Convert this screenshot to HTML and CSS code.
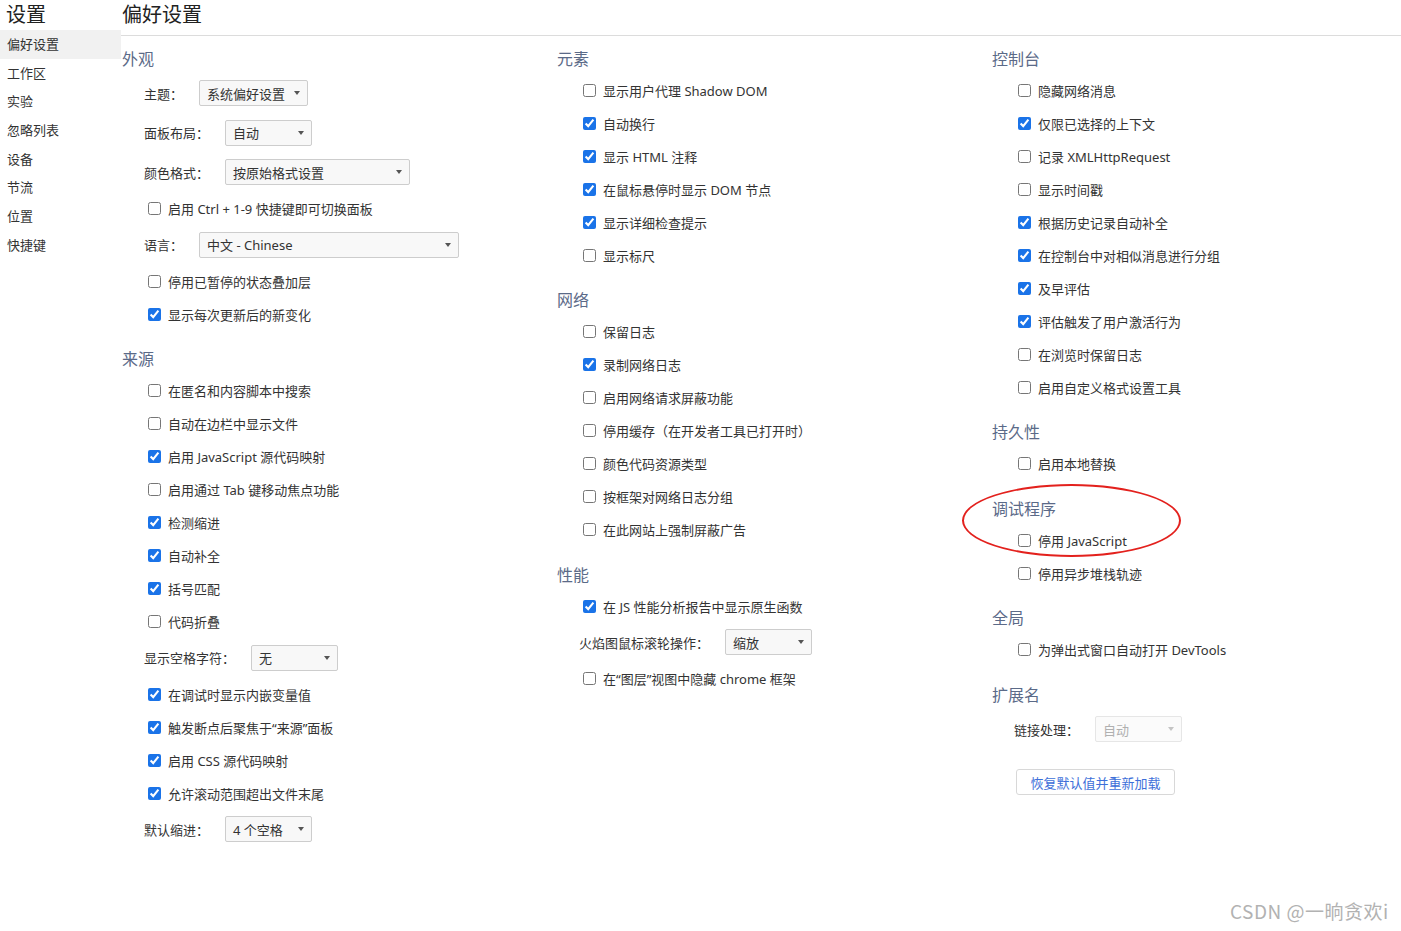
FILE: index.html
```html
<!DOCTYPE html>
<html lang="zh-CN">
<head>
    <meta charset="UTF-8">
    <title>设置 - 偏好设置</title>
    <link rel="stylesheet" href="styles.css">
</head>
<body>
<div class="app">
    <nav class="sidebar">
        <div class="sidebar-title">设置</div>
        <ul class="nav-list">
            <li class="nav-item active">偏好设置</li>
            <li class="nav-item">工作区</li>
            <li class="nav-item">实验</li>
            <li class="nav-item">忽略列表</li>
            <li class="nav-item">设备</li>
            <li class="nav-item">节流</li>
            <li class="nav-item">位置</li>
            <li class="nav-item">快捷键</li>
        </ul>
    </nav>
    <main class="main">
        <div class="page-title">偏好设置</div>
        <div class="columns">
            <div class="column">
                <section class="group">
                    <h3 class="group-title">外观</h3>
                    <div class="select-row"><span class="select-label">主题：</span><span class="select w109"><span>系统偏好设置</span><i class="arrow"></i></span></div>
                    <div class="select-row"><span class="select-label">面板布局：</span><span class="select w87"><span>自动</span><i class="arrow"></i></span></div>
                    <div class="select-row"><span class="select-label">颜色格式：</span><span class="select w185"><span>按原始格式设置</span><i class="arrow"></i></span></div>
                    <label class="check-row"><input type="checkbox">启用 Ctrl + 1-9 快捷键即可切换面板</label>
                    <div class="select-row"><span class="select-label">语言：</span><span class="select w260"><span>中文 - Chinese</span><i class="arrow"></i></span></div>
                    <label class="check-row"><input type="checkbox">停用已暂停的状态叠加层</label>
                    <label class="check-row"><input type="checkbox" checked>显示每次更新后的新变化</label>
                </section>
                <section class="group">
                    <h3 class="group-title">来源</h3>
                    <label class="check-row"><input type="checkbox">在匿名和内容脚本中搜索</label>
                    <label class="check-row"><input type="checkbox">自动在边栏中显示文件</label>
                    <label class="check-row"><input type="checkbox" checked>启用 JavaScript 源代码映射</label>
                    <label class="check-row"><input type="checkbox">启用通过 Tab 键移动焦点功能</label>
                    <label class="check-row"><input type="checkbox" checked>检测缩进</label>
                    <label class="check-row"><input type="checkbox" checked>自动补全</label>
                    <label class="check-row"><input type="checkbox" checked>括号匹配</label>
                    <label class="check-row"><input type="checkbox">代码折叠</label>
                    <div class="select-row"><span class="select-label">显示空格字符：</span><span class="select w87"><span>无</span><i class="arrow"></i></span></div>
                    <label class="check-row"><input type="checkbox" checked>在调试时显示内嵌变量值</label>
                    <label class="check-row"><input type="checkbox" checked>触发断点后聚焦于“来源”面板</label>
                    <label class="check-row"><input type="checkbox" checked>启用 CSS 源代码映射</label>
                    <label class="check-row"><input type="checkbox" checked>允许滚动范围超出文件末尾</label>
                    <div class="select-row"><span class="select-label">默认缩进：</span><span class="select w87"><span>4 个空格</span><i class="arrow"></i></span></div>
                </section>
            </div>
            <div class="column">
                <section class="group">
                    <h3 class="group-title">元素</h3>
                    <label class="check-row"><input type="checkbox">显示用户代理 Shadow DOM</label>
                    <label class="check-row"><input type="checkbox" checked>自动换行</label>
                    <label class="check-row"><input type="checkbox" checked>显示 HTML 注释</label>
                    <label class="check-row"><input type="checkbox" checked>在鼠标悬停时显示 DOM 节点</label>
                    <label class="check-row"><input type="checkbox" checked>显示详细检查提示</label>
                    <label class="check-row"><input type="checkbox">显示标尺</label>
                </section>
                <section class="group">
                    <h3 class="group-title">网络</h3>
                    <label class="check-row"><input type="checkbox">保留日志</label>
                    <label class="check-row"><input type="checkbox" checked>录制网络日志</label>
                    <label class="check-row"><input type="checkbox">启用网络请求屏蔽功能</label>
                    <label class="check-row"><input type="checkbox">停用缓存（在开发者工具已打开时）</label>
                    <label class="check-row"><input type="checkbox">颜色代码资源类型</label>
                    <label class="check-row"><input type="checkbox">按框架对网络日志分组</label>
                    <label class="check-row"><input type="checkbox">在此网站上强制屏蔽广告</label>
                </section>
                <section class="group">
                    <h3 class="group-title">性能</h3>
                    <label class="check-row"><input type="checkbox" checked>在 JS 性能分析报告中显示原生函数</label>
                    <div class="select-row"><span class="select-label">火焰图鼠标滚轮操作：</span><span class="select w87"><span>缩放</span><i class="arrow"></i></span></div>
                    <label class="check-row"><input type="checkbox">在“图层”视图中隐藏 chrome 框架</label>
                </section>
            </div>
            <div class="column">
                <section class="group">
                    <h3 class="group-title">控制台</h3>
                    <label class="check-row"><input type="checkbox">隐藏网络消息</label>
                    <label class="check-row"><input type="checkbox" checked>仅限已选择的上下文</label>
                    <label class="check-row"><input type="checkbox">记录 XMLHttpRequest</label>
                    <label class="check-row"><input type="checkbox">显示时间戳</label>
                    <label class="check-row"><input type="checkbox" checked>根据历史记录自动补全</label>
                    <label class="check-row"><input type="checkbox" checked>在控制台中对相似消息进行分组</label>
                    <label class="check-row"><input type="checkbox" checked>及早评估</label>
                    <label class="check-row"><input type="checkbox" checked>评估触发了用户激活行为</label>
                    <label class="check-row"><input type="checkbox">在浏览时保留日志</label>
                    <label class="check-row"><input type="checkbox">启用自定义格式设置工具</label>
                </section>
                <section class="group">
                    <h3 class="group-title">持久性</h3>
                    <label class="check-row"><input type="checkbox">启用本地替换</label>
                </section>
                <section class="group">
                    <h3 class="group-title">调试程序</h3>
                    <label class="check-row"><input type="checkbox">停用 JavaScript</label>
                    <label class="check-row"><input type="checkbox">停用异步堆栈轨迹</label>
                </section>
                <section class="group">
                    <h3 class="group-title">全局</h3>
                    <label class="check-row"><input type="checkbox">为弹出式窗口自动打开 DevTools</label>
                </section>
                <section class="group">
                    <h3 class="group-title">扩展名</h3>
                    <div class="select-row"><span class="select-label">链接处理：</span><span class="select w87 disabled"><span>自动</span><i class="arrow"></i></span></div>
                    <button class="reset-button">恢复默认值并重新加载</button>
                </section>
            </div>
        </div>
    </main>
</div>
<div class="highlight"></div>
<div class="watermark">CSDN @一晌贪欢i</div>
</body>
</html>
```

FILE: styles.css
```css
body {
    margin: 0;
    background: #fff;
    color: #333;
    font-family: "Noto Sans", "Noto Sans CJK SC", sans-serif;
    font-size: 13px;
    position: relative;
    height: 931px;
    overflow: hidden;
}

.app {
    display: flex;
}

.sidebar {
    width: 121px;
    flex-shrink: 0;
}

.sidebar-title {
    height: 30px;
    line-height: 29px;
    padding-left: 6px;
    font-size: 20px;
    color: #222;
}

.nav-list {
    list-style: none;
    margin: 0;
    padding: 0;
}

.nav-item {
    height: 28.7px;
    line-height: 28px;
    padding-left: 7px;
    color: #333;
}

.nav-item.active {
    background-color: #f1f1f1;
}

.main {
    flex: 1;
}

.page-title {
    height: 35px;
    line-height: 30px;
    padding-left: 1px;
    font-size: 20px;
    color: #222;
    border-bottom: 1px solid #dcdcdc;
}

.columns {
    display: grid;
    grid-template-columns: 435px 435px 1fr;
    padding-top: 7.5px;
    padding-left: 1px;
}

.group {
    margin-top: 13.5px;
}

.group:first-child {
    margin-top: 0;
}

.group-title {
    margin: 0;
    height: 30px;
    line-height: 30px;
    font-size: 16px;
    font-weight: normal;
    color: #5b6a88;
}

.check-row {
    display: flex;
    align-items: center;
    height: 33px;
    padding-left: 26px;
    white-space: nowrap;
}

.check-row input {
    width: 13px;
    height: 13px;
    margin: 0 7px 0 0;
    accent-color: #1a73e8;
}

.select-row {
    display: flex;
    align-items: center;
    height: 39.5px;
    padding-left: 22px;
    white-space: nowrap;
}

.select-label {
    margin-right: 16px;
}

.select {
    display: flex;
    align-items: center;
    justify-content: space-between;
    box-sizing: border-box;
    height: 26px;
    padding: 0 7px 0 7px;
    border: 1px solid #cdcdcd;
    border-radius: 2px;
    background-color: #f8f8f8;
    color: #333;
}

.select .arrow {
    width: 0;
    height: 0;
    border-left: 3.5px solid transparent;
    border-right: 3.5px solid transparent;
    border-top: 4px solid #555;
}

.select.disabled {
    background-color: #fbfbfb;
    border-color: #e6e6e6;
    color: #b0b0b0;
}

.select.disabled .arrow {
    border-top-color: #c4c4c4;
}

.w87 { width: 87px; }
.w109 { width: 109px; }
.w185 { width: 185px; }
.w260 { width: 260px; }

.reset-button {
    display: block;
    margin: 20px 0 0 24px;
    width: 159px;
    height: 26px;
    padding: 0;
    background: #fff;
    border: 1px solid #d8d8d8;
    border-radius: 3px;
    color: #3d6fd9;
    font-family: "Noto Sans", "Noto Sans CJK SC", sans-serif;
    font-size: 13px;
}

.highlight {
    position: absolute;
    left: 962px;
    top: 484px;
    width: 219px;
    height: 73px;
    box-sizing: border-box;
    border: 2.5px solid #e3211d;
    border-radius: 50%;
}

.watermark {
    position: absolute;
    left: 1230px;
    top: 897px;
    font-size: 19px;
    letter-spacing: 0.5px;
    color: #b2b2b2;
    font-family: "Noto Sans CJK SC", sans-serif;
    white-space: nowrap;
}
```
